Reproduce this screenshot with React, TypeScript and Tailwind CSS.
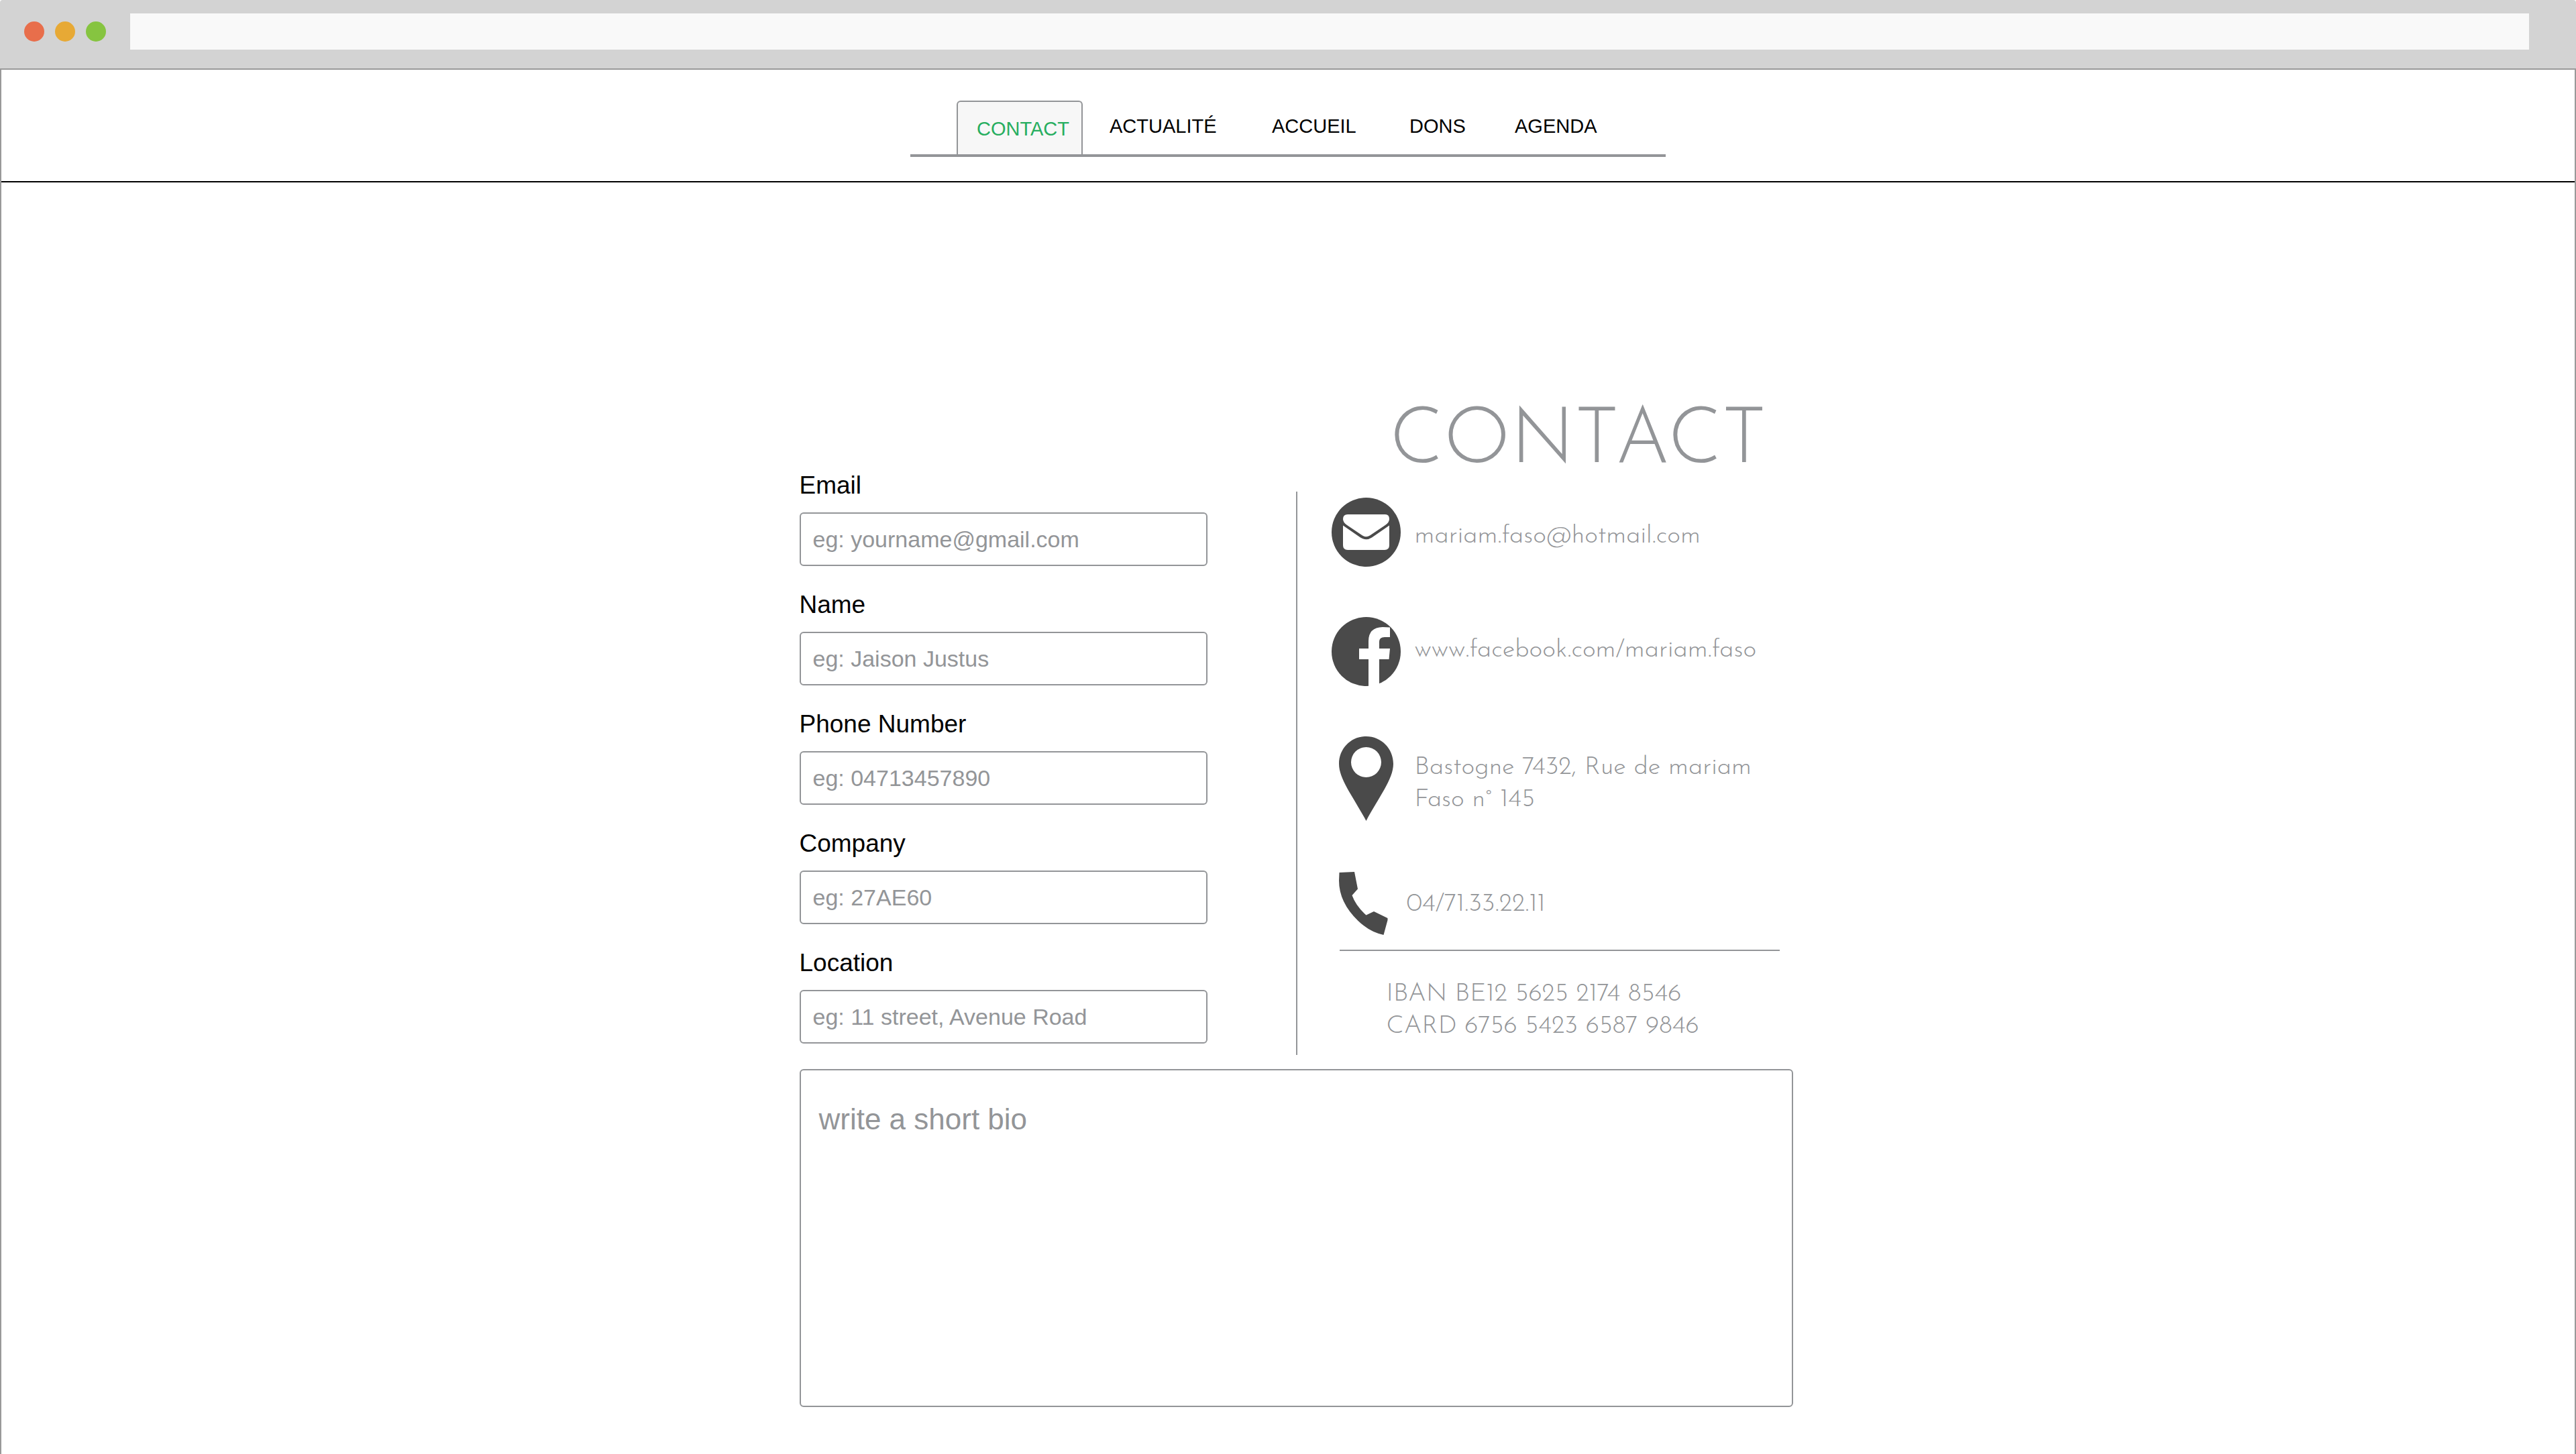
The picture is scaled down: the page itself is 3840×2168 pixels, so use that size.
import React from "react";

const navLinks = ["ACTUALITÉ", "ACCUEIL", "DONS", "AGENDA"];

const fields = [
  { id: "email", label: "Email", type: "email", placeholder: "eg: yourname@gmail.com" },
  { id: "name", label: "Name", type: "text", placeholder: "eg: Jaison Justus" },
  { id: "phone", label: "Phone Number", type: "tel", placeholder: "eg: 04713457890" },
  { id: "company", label: "Company", type: "text", placeholder: "eg: 27AE60" },
  { id: "location", label: "Location", type: "text", placeholder: "eg: 11 street, Avenue Road" },
];

function MailIcon() {
  return (
    <svg viewBox="0 0 103 103" className="w-[103px] shrink-0" aria-hidden="true">
      <circle cx="51.5" cy="51.5" r="51.5" fill="#4a4a4a" />
      <path
        fill="#fff"
        d="M24 25 H80 Q86 25 86 32 Q86 37 80 41 L57 56.500 Q51.500 60 46 56.500 L23 41 Q17 37 17 32 Q17 25 24 25 Z"
      />
      <path
        fill="#fff"
        d="M17 41.500 L43 59.500 Q51.500 65 60 59.500 L86 41.500 V71 Q86 78 79 78 H24 Q17 78 17 71 Z"
      />
    </svg>
  );
}

function FacebookIcon() {
  return (
    <svg viewBox="0 0 103 103" className="w-[103px] shrink-0" aria-hidden="true">
      <circle cx="51.5" cy="51.5" r="51.5" fill="#4a4a4a" />
      <path
        fill="#fff"
        d="M55 103 V63 H41 V47 H55 V36 Q55 15.500 76 15 Q82 15 87 15.500 V30 H79 Q71 30 71 37 V47 H87 L85.500 63 H71 V103 Z"
      />
    </svg>
  );
}

function PinIcon() {
  return (
    <svg viewBox="0 0 81 126" className="w-[81px] shrink-0" aria-hidden="true">
      <path
        fill="#4a4a4a"
        fillRule="evenodd"
        d="M40.500 0 C18 0 0 18 0 41 C0 64 22 91 40.500 126 C59 91 81 64 81 41 C81 18 63 0 40.500 0 Z M40.500 16 A22.500 22.500 0 1 1 40.500 61 A22.500 22.500 0 1 1 40.500 16 Z"
      />
    </svg>
  );
}

function PhoneIcon() {
  return (
    <svg viewBox="0 0 73 94" className="w-[73px] shrink-0" aria-hidden="true">
      <path
        fill="#4a4a4a"
        d="M.5 1 L23 0 L28 25.500 L19.500 35 Q25 50.500 40.500 64.500 L52 59 L72.500 69 V72 L66.500 94 Q46 90 28.500 73 Q0 45.500 0 13 Z"
      />
    </svg>
  );
}

export default function App() {
  return (
    <div className="flex min-h-screen flex-col bg-white font-['Liberation_Sans',Arial,sans-serif] text-black">
      <header className="flex h-[104px] items-start rounded-t-sm border-b-2 border-[#999] bg-[#d3d3d3] pl-9 pr-[70px] pt-5">
        <div className="flex gap-4 pt-3">
          <button type="button" aria-label="Close" className="size-[30px] rounded-full bg-[#e86e4b]" />
          <button type="button" aria-label="Minimize" className="size-[30px] rounded-full bg-[#e7a935]" />
          <button type="button" aria-label="Expand" className="size-[30px] rounded-full bg-[#86c440]" />
        </div>
        <input aria-label="Address" className="ml-9 h-[54px] grow bg-[#f9f9f9] px-4 text-[28px] outline-none" />
      </header>

      <div className="grow border-x-2 border-[#999]">
        <div className="border-b-2 border-black pb-9 pt-[46px]">
          <nav className="mx-auto grid max-w-[1126px] grid-cols-[228px_242px_205px_157px_1fr] border-b-4 border-[#939598] pl-[69px] text-[29px]">
            <a
              href="#contact"
              aria-current="page"
              className="flex h-20 w-[188px] items-center rounded-t-md border-2 border-b-0 border-[#939598] bg-[#f7f7f7] pl-7 pt-1 text-[#27ae60]"
            >
              CONTACT
            </a>
            {navLinks.map((name) => (
              <a key={name} href="#" className="flex h-20 items-center pb-0.5">
                {name}
              </a>
            ))}
          </nav>
        </div>

        <main className="pl-6">
          <form className="mx-auto max-w-[1481px] pb-[70px] pt-[315px]">
            <div className="flex items-end">
              <div className="flex w-[608px] shrink-0 flex-col gap-[34px] pb-[17px]">
                {fields.map((f) => (
                  <div key={f.id} className="flex flex-col gap-4">
                    <label htmlFor={f.id} className="text-[37px] leading-[48px]">
                      {f.label}
                    </label>
                    <input
                      id={f.id}
                      type={f.type}
                      placeholder={f.placeholder}
                      className="h-20 rounded-md border-2 border-[#939598] px-[18px] text-[34px] outline-none placeholder:text-[#939598]"
                    />
                  </div>
                ))}
              </div>

              <div className="ml-[132px] grow font-['Josefin_Sans',Lato,sans-serif] font-light text-[#939598]">
                <h1 className="pl-[140px] text-[116px] leading-[146px]">CONTACT</h1>
                <address className="border-l-2 border-[#939598] pl-[51px] pt-[9px] text-[38px] leading-[48px] not-italic">
                  <div className="flex items-center gap-[21px]">
                    <MailIcon />
                    <a href="mailto:mariam.faso@hotmail.com" className="pt-3">mariam.faso@hotmail.com</a>
                  </div>
                  <div className="mt-[75px] flex items-center gap-[21px]">
                    <FacebookIcon />
                    <a href="#facebook" className="pb-1">www.facebook.com/mariam.faso</a>
                  </div>
                  <div className="mt-[75px] flex items-center gap-8 pl-[11px]">
                    <PinIcon />
                    <p className="pt-4">
                      Bastogne 7432, Rue de mariam
                      <br />
                      Faso n° 145
                    </p>
                  </div>
                  <div className="mt-[76px] flex items-center gap-7 pl-[11px]">
                    <PhoneIcon />
                    <a href="tel:0471332211" className="pt-1">04/71.33.22.11</a>
                  </div>
                  <hr className="ml-3 mr-5 mt-[22px] border-t-2 border-[#939598]" />
                  <p className="pb-[18px] pl-[82px] pt-[41px]">
                    IBAN BE12 5625 2174 8546
                    <br />
                    CARD 6756 5423 6587 9846
                  </p>
                </address>
              </div>
            </div>

            <textarea
              aria-label="Short bio"
              placeholder="write a short bio"
              className="mt-[21px] block h-[504px] w-full resize-none rounded-md border-2 border-[#939598] px-[27px] pt-[49px] text-[44px] leading-[48px] outline-none placeholder:text-[#939598]"
            />
          </form>
        </main>
      </div>
    </div>
  );
}
